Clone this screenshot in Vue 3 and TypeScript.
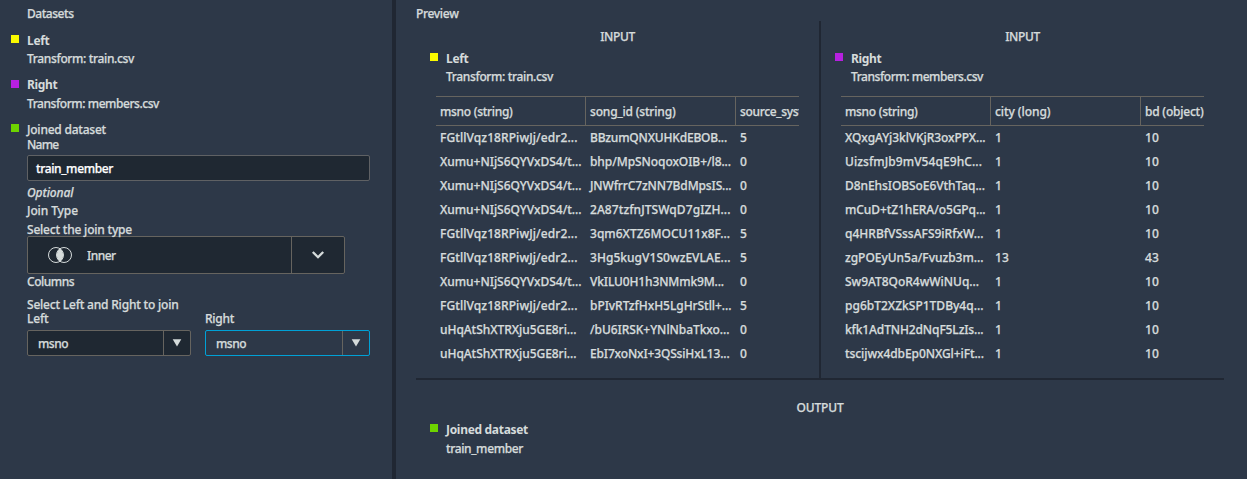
<script setup lang="ts">
import type { Directive } from 'vue'

interface Cell { t: string; w: number }
interface Table { heads: Cell[]; rows: Cell[][] }

const c = (t: string, w: number): Cell => ({ t, w })

/* Tracks a label so that its letters span the given width. */
const vFit: Directive<HTMLElement, number> = {
  mounted(el, { value }) {
    const range = document.createRange()
    range.selectNodeContents(el)
    const natural = range.getBoundingClientRect().width
    const count = (el.textContent ?? '').length
    el.style.letterSpacing = `${((value - 0.5 - natural) / count).toFixed(3)}px`
  },
}

const fg = c('FGtllVqz18RPiwJj/edr2...', 138)
const xu = c('Xumu+NIjS6QYVxDS4/t...', 142)
const uh = c('uHqAtShXTRXju5GE8ri...', 137)
const n = (v: number): Cell => c(String(v), v > 9 ? 14.5 : 7.5)

const left: Table = {
  heads: [c('msno (string)', 73), c('song_id (string)', 86), c('source_syst', 63)],
  rows: [
    [fg, c('BBzumQNXUHKdEBOB...', 137.5), n(5)],
    [xu, c('bhp/MpSNoqoxOIB+/l8...', 141.5), n(0)],
    [xu, c('JNWfrrC7zNN7BdMpsIS...', 142), n(0)],
    [xu, c('2A87tzfnJTSWqD7gIZH...', 141), n(0)],
    [fg, c('3qm6XTZ6MOCU11x8F...', 140.5), n(5)],
    [fg, c('3Hg5kugV1S0wzEVLAE...', 141), n(5)],
    [xu, c('VkILU0H1h3NMmk9M...', 134.5), n(0)],
    [fg, c('bPIvRTzfHxH5LgHrStll+...', 142), n(5)],
    [uh, c('/bU6IRSK+YNlNbaTkxo...', 140), n(0)],
    [uh, c('EbI7xoNxI+3QSsiHxL13...', 140), n(0)],
  ],
}

const right: Table = {
  heads: [c('msno (string)', 73), c('city (long)', 56), c('bd (object)', 59)],
  rows: [
    [c('XQxgAYj3klVKjR3oxPPX...', 141), n(1), n(10)],
    [c('UizsfmJb9mV54qE9hC...', 137.5), n(1), n(10)],
    [c('D8nEhsIOBSoE6VthTaq...', 140.5), n(1), n(10)],
    [c('mCuD+tZ1hERA/o5GPq...', 141), n(1), n(10)],
    [c('q4HRBfVSssAFS9iRfxW...', 139), n(1), n(10)],
    [c('zgPOEyUn5a/Fvuzb3m...', 139), n(13), n(43)],
    [c('Sw9AT8QoR4wWiNUq...', 134.5), n(1), n(10)],
    [c('pg6bT2XZkSP1TDBy4q...', 139), n(1), n(10)],
    [c('kfk1AdTNH2dNqF5LzIs...', 139), n(1), n(10)],
    [c('tscijwx4dbEp0NXGl+iFt...', 139.5), n(1), n(10)],
  ],
}

const inputs = [
  { name: 'Left', nw: 23, file: 'Transform: train.csv', fw: 107.5, color: 'yellow', table: left },
  { name: 'Right', nw: 31, file: 'Transform: members.csv', fw: 132.5, color: 'purple', table: right },
]
</script>

<template>
  <div class="app">
    <aside class="side">
      <div class="line title"><span v-fit="47">Datasets</span></div>
      <div v-for="d in inputs" :key="d.name" class="dataset">
        <div class="line name"><i class="mark" :class="d.color"></i><b v-fit="d.nw">{{ d.name }}</b></div>
        <div class="line file"><span v-fit="d.fw">{{ d.file }}</span></div>
      </div>
      <div class="line joined"><i class="mark green"></i><span v-fit="79.5">Joined dataset</span></div>
      <div class="line nm"><span v-fit="32">Name</span></div>
      <div class="field"><span v-fit="77.5">train_member</span></div>
      <div class="line optional"><em v-fit="47">Optional</em></div>
      <div class="line join-type"><span v-fit="51.5">Join Type</span></div>
      <div class="line select-type"><span v-fit="105.5">Select the join type</span></div>
      <div class="join">
        <div class="join-value">
          <svg width="26" height="18" viewBox="0 0 26 18" fill="none" stroke="#d5dbdb">
            <path d="M13 2.2C17.2 5.5 17.2 12.5 13 15.8C8.8 12.5 8.8 5.5 13 2.2Z" fill="#d5dbdb" stroke="none" />
            <circle cx="9" cy="9" r="7.5" />
            <circle cx="17" cy="9" r="7.5" />
          </svg>
          <span v-fit="29" class="inner">Inner</span>
        </div>
        <div class="join-arrow">
          <svg width="14" height="10" viewBox="0 0 14 10" fill="none" stroke="#d5dbdb" stroke-width="2.3">
            <path d="M1.8 2L7 7.2L12.2 2" />
          </svg>
        </div>
      </div>
      <div class="line columns"><span v-fit="47.5">Columns</span></div>
      <div class="line help"><span v-fit="152">Select Left and Right to join</span></div>
      <div class="pair">
        <div v-for="(d, i) in inputs" :key="d.name">
          <div class="line pl"><span v-fit="i ? 29.5 : 22">{{ d.name }}</span></div>
          <div class="select" :class="{ focus: i === 1 }">
            <div class="value"><span v-fit="30.5">msno</span></div>
            <div class="arrow">
              <svg width="10" height="8" viewBox="0 0 10 8"><path d="M.7 .3H9.3L5 7.6Z" fill="#d5dbdb" /></svg>
            </div>
          </div>
        </div>
      </div>
    </aside>

    <main class="preview">
      <div class="line head"><span v-fit="43">Preview</span></div>
      <div class="inputs">
        <section v-for="d in inputs" :key="d.name" class="input">
          <div class="line caption"><span v-fit="35">INPUT</span></div>
          <div class="line name"><i class="mark" :class="d.color"></i><b v-fit="d.nw">{{ d.name }}</b></div>
          <div class="line file"><span v-fit="d.fw">{{ d.file }}</span></div>
          <div class="table">
            <div class="row header">
              <div v-for="h in d.table.heads" :key="h.t" class="cell"><span v-fit="h.w">{{ h.t }}</span></div>
            </div>
            <div v-for="(r, i) in d.table.rows" :key="i" class="row">
              <div v-for="(x, j) in r" :key="j" class="cell"><span v-fit="x.w">{{ x.t }}</span></div>
            </div>
          </div>
        </section>
      </div>
      <section class="output">
        <div class="line caption"><span v-fit="47.5">OUTPUT</span></div>
        <div class="line name"><i class="mark green"></i><b v-fit="82.5">Joined dataset</b></div>
        <div class="line file"><span v-fit="77.5">train_member</span></div>
      </section>
    </main>
  </div>
</template>

<style>
body { background: #2d3848; overflow: hidden; }
</style>

<style scoped>
* { box-sizing: border-box; }
.app {
  display: flex;
  width: 1247px;
  height: 479px;
  overflow: hidden;
  background: #2d3848;
  color: #d5dbdb;
  font: 500 12px/18px "Noto Sans", "Open Sans", sans-serif;
  -webkit-text-stroke: .25px currentColor;
  white-space: nowrap;
}
b { font-weight: 700; -webkit-text-stroke: 0; }
.line { height: 18px; }
.side { width: 396px; padding: 5px 0 0 27px; border-right: 4px solid #202733; }
.name, .joined { display: flex; align-items: flex-start; }
.mark { width: 8px; height: 8px; margin: 3px 8px 0 -16px; flex: none; }
.yellow { background: #fafa00; }
.purple { background: #b620e0; }
.green { background: #6dd400; }
.dataset { margin-top: 9px; }
.dataset + .dataset { margin-top: 8px; }
.dataset + .dataset .mark { margin-top: 4px; }
.dataset + .dataset .file { margin-top: 1px; }
.joined { margin-top: 8px; }
.nm { margin-top: -3px; }
.field {
  width: 343px;
  height: 26px;
  margin-top: 1px;
  padding-left: 8px;
  border: 1px solid #5f6164;
  border-radius: 2px;
  background: #1f2832;
  color: #fff;
  line-height: 25px;
}
.optional { margin-top: 3px; }
.select-type { margin-top: 1px; height: 15px; }
.join {
  display: flex;
  width: 318px;
  height: 38px;
  border: 1px solid #66645f;
  border-radius: 2px;
  background: #1f2832;
}
.join-value { flex: 1; display: flex; align-items: center; gap: 14px; padding-left: 19px; }
.inner { padding-top: 1px; }
.join-arrow { width: 53px; display: flex; align-items: center; justify-content: center; border-left: 1px solid #66645f; }
.columns { margin-top: -1px; }
.help { margin-top: 5px; }
.pair { display: flex; gap: 14px; margin-top: -4px; }
.select {
  display: flex;
  width: 164px;
  height: 26px;
  margin-top: 2px;
  border: 1px solid #66645f;
  border-radius: 2px;
  background: #1f2832;
  line-height: 26px;
}
.focus { width: 165px; border-color: #00a1d6; background: #2d3848; }
.value { flex: 1; padding-left: 10px; }
.arrow { width: 27px; display: flex; justify-content: center; align-items: center; border-left: 1px solid #66645f; }
.preview { flex: 1; padding: 5px 23px 0 20px; }
.head { height: 16px; }
.inputs { display: flex; height: 357px; }
.input { width: 403px; padding-top: 7px; }
.input + .input { width: 405px; border-left: 2px solid #202733; }
.caption { text-align: center; }
.input .name, .output .name { margin-top: 4px; padding-left: 30px; }
.input .file { padding-left: 30px; }
.table { width: 363px; margin: 10px 0 0 20px; overflow: hidden; }
.row { display: grid; grid-template-columns: 150px 150px 150px; height: 24px; line-height: 24px; }
.header { height: 30px; border-top: 1px solid #66645f; border-bottom: 1px solid #66645f; line-height: 30px; }
.cell { padding-left: 4px; overflow: hidden; }
.header .cell { border-right: 1px solid #66645f; }
.output { height: 101px; padding-top: 19px; border-top: 2px solid #202733; }
.output .file { padding-left: 30px; margin-top: 1px; }
</style>
